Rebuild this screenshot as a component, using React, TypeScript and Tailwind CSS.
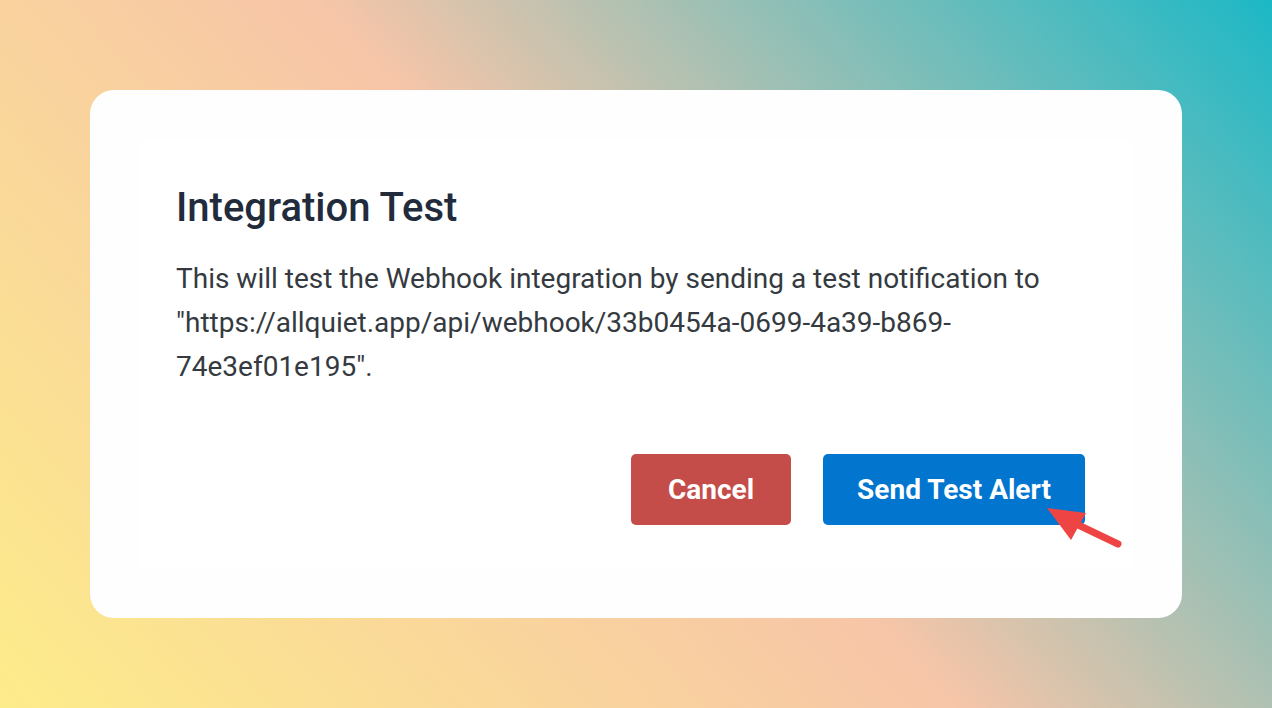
import React from "react";

export default function App() {
  return (
    <div
      className="w-[1272px] h-[708px] p-[90px] flex"
      style={{ fontFamily: "Roboto, 'Noto Sans', sans-serif" }}
    >
      <div className="absolute inset-0 -z-10 w-[1272px] h-[708px] bg-[linear-gradient(48deg,#fdec8a_0%,#f7c5a8_50%,#1cb8c6_100%)]" />
      <div className="flex-1 bg-[#fefefe] rounded-3xl p-[50px] flex">
        <div className="flex-1 bg-white pl-[36px] pr-[47px] pt-[44px] pb-[43px] flex flex-col">
          <h1 className="text-[40px] leading-[48px] font-medium text-[#222b3b]">
            Integration Test
          </h1>
          <p className="mt-[25px] text-[28px] leading-[44px] text-[#343a40]">
            This will test the Webhook integration by sending a test notification to
            <br />
            "https://allquiet.app/api/webhook/33b0454a-0699-4a39-b869-
            <br />
            74e3ef01e195".
          </p>
          <div className="mt-auto flex justify-end gap-[32px]">
            <button className="w-[160px] h-[71px] rounded-[5px] bg-[#c44d4a] text-white text-[28px] font-bold">
              Cancel
            </button>
            <div className="relative">
              <button className="w-[262px] h-[71px] rounded-[5px] bg-[#0275cf] text-white text-[28px] font-bold">
                Send Test Alert
              </button>
              <svg
                className="absolute left-[217px] top-[46px]"
                width="85"
                height="50"
                viewBox="0 0 85 50"
              >
                <line
                  x1="32"
                  y1="22"
                  x2="78"
                  y2="44"
                  stroke="#ef4444"
                  strokeWidth="7"
                  strokeLinecap="round"
                />
                <polygon points="7,8 46,13 31,40" fill="#ef4444" />
              </svg>
            </div>
          </div>
        </div>
      </div>
    </div>
  );
}
